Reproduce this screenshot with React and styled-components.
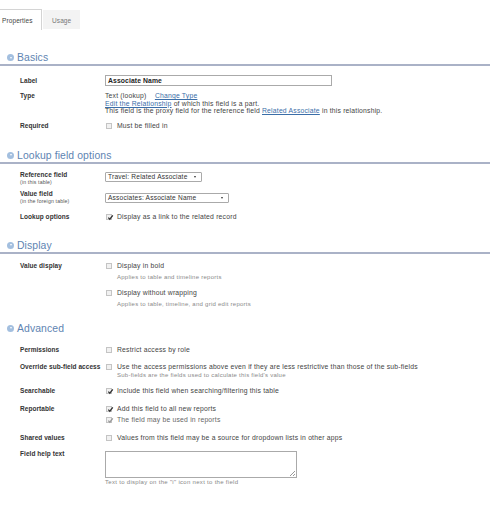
import React from "react";
import styled, { createGlobalStyle } from "styled-components";

const Global = createGlobalStyle`
  html, body { margin: 0; padding: 0; background: #fff; }
  body { font-family: "Liberation Sans", Arial, sans-serif; color: #333; width: 490px; overflow: hidden; }
`;

const Page = styled.div`
  display: flex;
  flex-direction: column;
  width: 490px;
  height: 519px;
`;

const Tabs = styled.div`
  display: flex;
  margin-top: 9px;
  height: 21px;
  align-items: stretch;
`;

const Tab = styled.div`
  display: flex;
  align-items: center;
  font-size: 6.5px;
  letter-spacing: 0.1px;
  color: ${(p) => (p.active ? "#444" : "#777")};
  background: ${(p) => (p.active ? "#fff" : "#f3f3f3")};
  border-top: 1px solid ${(p) => (p.active ? "#d4d4d4" : "#f3f3f3")};
  border-right: 1px solid ${(p) => (p.active ? "#d4d4d4" : "#f3f3f3")};
  padding: ${(p) => (p.active ? "0 0 0 2px" : "0 0 0 9px")};
  width: ${(p) => p.w}px;
  box-sizing: border-box;
  margin-top: ${(p) => (p.active ? 0 : 1)}px;
  margin-bottom: ${(p) => (p.active ? 0 : 1)}px;
  margin-left: ${(p) => (p.active ? 0 : 1)}px;
`;

const Header = styled.div`
  display: flex;
  align-items: center;
  gap: 3px;
  height: 13px;
  margin-top: ${(p) => p.mt}px;
  padding-left: 7px;
  border-bottom: 2px solid ${(p) => (p.noLine ? "transparent" : "#aab2c7")};
  font-size: 10.4px;
  letter-spacing: 0.1px;
  color: #5e84b2;
`;

const Arrow = styled.span`
  width: 7px;
  height: 7px;
  border-radius: 50%;
  background: #a3bfdf;
  display: flex;
  align-items: center;
  justify-content: center;
  &::after {
    content: "";
    border-left: 1.6px solid transparent;
    border-right: 1.6px solid transparent;
    border-top: 2px solid #fff;
    margin-top: 0.5px;
  }
`;

const Row = styled.div`
  display: grid;
  grid-template-columns: 85px 1fr;
  align-items: ${(p) => (p.center ? "center" : "start")};
  margin-top: ${(p) => p.mt}px;
  padding-left: 20px;
`;

const Label = styled.div`
  font-weight: bold;
  font-size: 6.5px;
  letter-spacing: 0.05px;
  line-height: 8px;
  color: #333;
  white-space: nowrap;
`;

const SubLabel = styled.div`
  font-size: 5.2px;
  letter-spacing: 0.15px;
  line-height: 6px;
  color: #555;
`;

const Value = styled.div`
  display: flex;
  flex-direction: column;
  gap: ${(p) => p.gap || 0}px;
  font-size: 6.8px;
  letter-spacing: 0.2px;
  line-height: ${(p) => p.lh || 8}px;
  color: #444;
  white-space: nowrap;
`;

const TextInput = styled.div`
  width: 227px;
  height: 11px;
  box-sizing: border-box;
  border: 1px solid #aaa;
  font-weight: bold;
  font-size: 6.8px;
  letter-spacing: 0.1px;
  display: flex;
  align-items: center;
  padding-left: 2px;
  color: #222;
`;

const Select = styled.div`
  width: ${(p) => p.w}px;
  height: 10px;
  box-sizing: border-box;
  border: 1px solid #aaa;
  border-radius: 1px;
  font-size: 6.6px;
  letter-spacing: 0.2px;
  display: flex;
  align-items: center;
  justify-content: space-between;
  padding: 0 5px 0 2px;
  color: #333;
  margin-top: ${(p) => p.mt || 0}px;
  &::after {
    content: "";
    border-left: 1.5px solid transparent;
    border-right: 1.5px solid transparent;
    border-top: 2.5px solid #333;
  }
`;

const Link = styled.span`
  color: #3b6ea8;
  text-decoration: underline;
`;

const Check = styled.div`
  display: flex;
  align-items: flex-start;
  gap: 5px;
  margin-top: ${(p) => p.mt || 0}px;
`;

const Box = styled.span`
  width: 6px;
  height: 6px;
  margin-top: 1px;
  margin-left: 1px;
  flex: none;
  box-sizing: border-box;
  border: 1px solid #c4c4c4;
  background: #f1f1f1;
  position: relative;
  svg { position: absolute; left: -0.5px; top: -1px; }
`;

const CheckText = styled.div`
  display: flex;
  flex-direction: column;
  gap: ${(p) => p.gap || 0}px;
`;

const Hint = styled.div`
  font-size: 6px;
  letter-spacing: 0.25px;
  line-height: 8px;
  color: #8a8a8a;
`;

const TextArea = styled.div`
  width: 192px;
  height: 27px;
  box-sizing: border-box;
  border: 1px solid #aaa;
  margin-top: 1px;
  position: relative;
  &::after {
    content: "";
    position: absolute;
    right: 1px;
    bottom: 1px;
    width: 5px;
    height: 5px;
    background: linear-gradient(135deg, transparent 45%, #999 45%, #999 55%, transparent 55%, transparent 70%, #999 70%, #999 80%, transparent 80%);
  }
`;

const Caption = styled.div`
  font-size: 6px;
  letter-spacing: 0.3px;
  line-height: 8px;
  color: #888;
`;

const Tick = ({ light }) => (
  <svg width="7" height="7" viewBox="0 0 7 7">
    <path d="M1.3 3.6 L2.8 5.2 L5.8 1.4" fill="none" stroke={light ? "#9a9a9a" : "#333"} strokeWidth="1.3" />
  </svg>
);

const CheckItem = ({ checked, light, children, hint, mt }) => (
  <Check mt={mt}>
    <Box>{checked && <Tick light={light} />}</Box>
    <CheckText gap={3}>
      <div style={light ? { color: "#666" } : undefined}>{children}</div>
      {hint && <Hint>{hint}</Hint>}
    </CheckText>
  </Check>
);

const SectionHeader = ({ children, mt, noLine }) => (
  <Header mt={mt} noLine={noLine}>
    <Arrow />
    {children}
  </Header>
);

export default function App() {
  return (
    <Page>
      <Global />
      <Tabs>
        <Tab active w={42}>Properties</Tab>
        <Tab w={37}>Usage</Tab>
      </Tabs>

      <SectionHeader mt={21}>Basics</SectionHeader>
      <Row center mt={9}>
        <Label>Label</Label>
        <TextInput>Associate Name</TextInput>
      </Row>
      <Row mt={6}>
        <Label>Type</Label>
        <Value lh={7.5}>
          <div>
            Text (lookup)&nbsp;&nbsp;&nbsp; <Link>Change Type</Link>
          </div>
          <div>
            <Link>Edit the Relationship</Link> of which this field is a part.
          </div>
          <div>
            This field is the proxy field for the reference field <Link>Related Associate</Link> in this relationship.
          </div>
        </Value>
      </Row>
      <Row mt={7.5}>
        <Label>Required</Label>
        <Value>
          <CheckItem>Must be filled in</CheckItem>
        </Value>
      </Row>

      <SectionHeader mt={18.5}>Lookup field options</SectionHeader>
      <Row mt={7.5}>
        <div>
          <Label>Reference field</Label>
          <SubLabel>(in this table)</SubLabel>
        </div>
        <Value>
          <Select w={97} mt={1}>Travel: Related Associate</Select>
        </Value>
      </Row>
      <Row mt={5}>
        <div>
          <Label>Value field</Label>
          <SubLabel>(in the foreign table)</SubLabel>
        </div>
        <Value>
          <Select w={124} mt={3}>Associates: Associate Name</Select>
        </Value>
      </Row>
      <Row mt={9}>
        <Label>Lookup options</Label>
        <Value>
          <CheckItem checked>Display as a link to the related record</CheckItem>
        </Value>
      </Row>

      <SectionHeader mt={17.5}>Display</SectionHeader>
      <Row mt={8.5}>
        <Label>Value display</Label>
        <Value>
          <CheckItem hint="Applies to table and timeline reports">Display in bold</CheckItem>
          <CheckItem mt={8} hint="Applies to table, timeline, and grid edit reports">
            Display without wrapping
          </CheckItem>
        </Value>
      </Row>

      <SectionHeader mt={13.5} noLine>Advanced</SectionHeader>
      <Row mt={9.5}>
        <Label>Permissions</Label>
        <Value>
          <CheckItem>Restrict access by role</CheckItem>
        </Value>
      </Row>
      <Row mt={9}>
        <Label>Override sub-field access</Label>
        <Value>
          <Check>
            <Box />
            <CheckText>
              <div>Use the access permissions above even if they are less restrictive than those of the sub-fields</div>
              <Hint>Sub-fields are the fields used to calculate this field's value</Hint>
            </CheckText>
          </Check>
        </Value>
      </Row>
      <Row mt={8}>
        <Label>Searchable</Label>
        <Value>
          <CheckItem checked>Include this field when searching/filtering this table</CheckItem>
        </Value>
      </Row>
      <Row mt={10}>
        <Label>Reportable</Label>
        <Value gap={3}>
          <CheckItem checked>Add this field to all new reports</CheckItem>
          <CheckItem checked light>The field may be used in reports</CheckItem>
        </Value>
      </Row>
      <Row mt={10}>
        <Label>Shared values</Label>
        <Value>
          <CheckItem>Values from this field may be a source for dropdown lists in other apps</CheckItem>
        </Value>
      </Row>
      <Row mt={8}>
        <Label>Field help text</Label>
        <Value>
          <TextArea />
          <Caption>Text to display on the "i" icon next to the field</Caption>
        </Value>
      </Row>
    </Page>
  );
}
